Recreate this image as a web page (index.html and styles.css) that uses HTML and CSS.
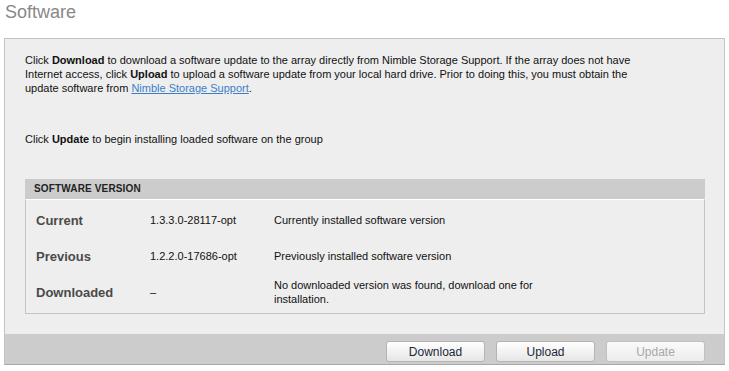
FILE: index.html
```html
<!DOCTYPE html>
<html lang="en">
<head>
  <meta charset="utf-8" />
  <title>Software</title>
  <link rel="stylesheet" href="styles.css">
</head>
<body>
  <div class="page">
    <h1 class="title">Software</h1>

    <div class="panel">
      <div class="panel-body">
        <p class="intro">
          Click <b>Download</b> to download a software update to the array directly from Nimble Storage Support. If the array does not have<br>
          Internet access, click <b>Upload</b> to upload a software update from your local hard drive. Prior to doing this, you must obtain the<br>
          update software from <a href="#">Nimble Storage Support</a>.
        </p>
        <p class="update-note">Click <b>Update</b> to begin installing loaded software on the group</p>

        <div class="section">
          <div class="section-head">SOFTWARE VERSION</div>
          <div class="section-body">
            <div class="row">
              <div class="label">Current</div>
              <div class="version">1.3.3.0-28117-opt</div>
              <div class="desc">Currently installed software version</div>
            </div>
            <div class="row">
              <div class="label">Previous</div>
              <div class="version">1.2.2.0-17686-opt</div>
              <div class="desc">Previously installed software version</div>
            </div>
            <div class="row">
              <div class="label">Downloaded</div>
              <div class="version">&ndash;</div>
              <div class="desc">No downloaded version was found, download one for installation.</div>
            </div>
          </div>
        </div>
      </div>

      <div class="panel-footer">
        <button class="btn">Download</button>
        <button class="btn">Upload</button>
        <button class="btn" disabled>Update</button>
      </div>
    </div>
  </div>
</body>
</html>
```

FILE: styles.css
```css
* {
    margin: 0;
    padding: 0;
    box-sizing: border-box;
}

body {
    font-family: "Liberation Sans", Arial, sans-serif;
    font-size: 11px;
    color: #111;
    background-color: #ffffff;
}

.page {
    padding: 0 4px;
}

.title {
    margin-top: 2px;
    height: 36px;
    font-size: 18px;
    font-weight: normal;
    color: #888888;
    padding-left: 1px;
}

.panel {
    background-color: #eeeeee;
    border: 1px solid #c4c4c4;
    border-bottom-color: #a8a8a8;
}

.panel-body {
    padding: 14px 19px 20px 20px;
}

.intro {
    line-height: 14px;
}

.intro a {
    color: #3b7fc8;
}

.update-note {
    margin-top: 37px;
    line-height: 14px;
}

.section {
    margin-top: 33px;
}

.section-head {
    height: 20px;
    line-height: 20px;
    padding-left: 9px;
    background-color: #cccccc;
    font-size: 10px;
    letter-spacing: 0.15px;
    font-weight: bold;
    color: #222;
}

.section-body {
    border: 1px solid #c4c4c4;
    border-top: 1px solid #ffffff;
    padding: 2px 0 3px;
}

.row {
    display: flex;
    align-items: center;
    height: 36px;
}

.label {
    width: 124px;
    padding-left: 10px;
    font-size: 13px;
    font-weight: bold;
    color: #4a4a4a;
}

.version {
    width: 124px;
}

.desc {
    width: 280px;
    line-height: 14px;
}

.panel-footer {
    display: flex;
    justify-content: flex-end;
    gap: 11px;
    height: 30px;
    padding: 7px 19px 0 0;
    background-color: #cccccc;
}

.btn {
    width: 99px;
    height: 21px;
    font-family: "Liberation Sans", Arial, sans-serif;
    font-size: 12px;
    color: #1c2838;
    background: linear-gradient(#ffffff, #e6e6e6);
    border: 1px solid #b4b4b4;
    border-radius: 3px;
    cursor: pointer;
}

.btn:disabled {
    color: #a8a8a8;
    background: linear-gradient(#fafafa, #ededed);
    border-color: #c0c0c0;
    cursor: default;
}
```
